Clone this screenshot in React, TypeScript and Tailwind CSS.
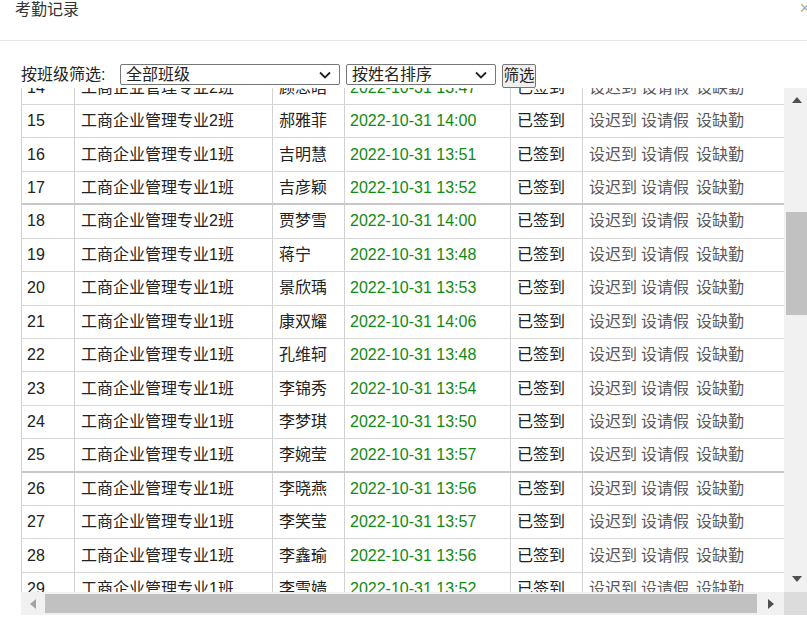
import React from "react";

const rows: [string, string, string, string][] = [
  ["14", "工商企业管理专业2班", "顾思皓", "2022-10-31 13:47"],
  ["15", "工商企业管理专业2班", "郝雅菲", "2022-10-31 14:00"],
  ["16", "工商企业管理专业1班", "吉明慧", "2022-10-31 13:51"],
  ["17", "工商企业管理专业1班", "吉彦颖", "2022-10-31 13:52"],
  ["18", "工商企业管理专业2班", "贾梦雪", "2022-10-31 14:00"],
  ["19", "工商企业管理专业1班", "蒋宁", "2022-10-31 13:48"],
  ["20", "工商企业管理专业1班", "景欣瑀", "2022-10-31 13:53"],
  ["21", "工商企业管理专业1班", "康双耀", "2022-10-31 14:06"],
  ["22", "工商企业管理专业1班", "孔维轲", "2022-10-31 13:48"],
  ["23", "工商企业管理专业1班", "李锦秀", "2022-10-31 13:54"],
  ["24", "工商企业管理专业1班", "李梦琪", "2022-10-31 13:50"],
  ["25", "工商企业管理专业1班", "李婉莹", "2022-10-31 13:57"],
  ["26", "工商企业管理专业1班", "李晓燕", "2022-10-31 13:56"],
  ["27", "工商企业管理专业1班", "李笑莹", "2022-10-31 13:57"],
  ["28", "工商企业管理专业1班", "李鑫瑜", "2022-10-31 13:56"],
  ["29", "工商企业管理专业1班", "李雪嫱", "2022-10-31 13:52"],
];

const Chevron = () => (
  <svg width="14" height="10" viewBox="0 0 14 10" className="shrink-0">
    <polyline points="2,2.5 7,7.5 12,2.5" fill="none" stroke="#222" strokeWidth="1.8" />
  </svg>
);

export default function App() {
  return (
    <div
      className="w-[807px] h-[630px] bg-white overflow-hidden text-[16px] text-[#222]"
      style={{ fontFamily: '"Liberation Sans", "Noto Sans CJK SC", sans-serif' }}
    >
      {/* header */}
      <div className="h-[41px] border-b border-[#e6e6e6] flex items-start justify-between">
        <div className="pl-[15px] leading-[20px] text-[16px] text-[#333]">考勤记录</div>
        <div className="leading-[16px] text-[18px] text-[#aaa] mr-[-3px]">×</div>
      </div>

      {/* filter row */}
      <div className="pl-[21px] pt-[23px] flex items-start h-[47px]">
        <div className="w-[99px] shrink-0 h-[22px] flex items-center leading-[22px] whitespace-nowrap">按班级筛选:</div>
        <div className="w-[220px] shrink-0 h-[21px] border border-[#767676] rounded-[2px] flex items-center justify-between pl-[5px] pr-[7px] leading-[19px]">
          <span>全部班级</span>
          <Chevron />
        </div>
        <div className="ml-[6px] w-[150px] shrink-0 h-[21px] border border-[#767676] rounded-[2px] flex items-center justify-between pl-[5px] pr-[7px] leading-[19px]">
          <span>按姓名排序</span>
          <Chevron />
        </div>
        <div className="ml-[6px] w-[34px] shrink-0 h-[24px] border border-[#767676] rounded-[2px] bg-[#efefef] flex items-center justify-center leading-[20px] whitespace-nowrap text-[15.5px]">
          筛选
        </div>
      </div>

      {/* table area */}
      <div className="ml-[21px] flex flex-col w-[786px]">
        <div className="flex h-[504px]">
          <div className="w-[763px] overflow-hidden">
            <div className="mt-[-16.43px] w-[770px]">
              {rows.map((r) => {
                const thick = r[0] === "17" || r[0] === "25";
                return (
                  <div
                    key={r[0]}
                    className={
                      "flex h-[33.43px] box-border border-l border-[#d2d2d2] " +
                      (thick ? "border-b-2 border-b-[#c8c8c8]" : "border-b border-b-[#d6d6d6]")
                    }
                  >
                    <div className="w-[53px] border-r border-[#d2d2d2] pl-[5px] flex items-center">{r[0]}</div>
                    <div className="w-[198px] border-r border-[#d2d2d2] pl-[6px] flex items-center">{r[1]}</div>
                    <div className="w-[72px] border-r border-[#d2d2d2] pl-[6px] flex items-center">{r[2]}</div>
                    <div className="w-[166px] border-r border-[#d2d2d2] pl-[5px] flex items-center text-[#118a11]">{r[3]}</div>
                    <div className="w-[72px] border-r border-[#d2d2d2] pl-[6px] flex items-center">已签到</div>
                    <div className="w-[208px] pl-[6px] flex items-center text-[#5a5a5a] whitespace-nowrap">
                      <span>设迟到</span>
                      <span className="ml-[4px]">设请假</span>
                      <span className="ml-[7px]">设缺勤</span>
                    </div>
                  </div>
                );
              })}
            </div>
          </div>
          {/* vertical scrollbar */}
          <div className="w-[23px] shrink-0 bg-[#f1f1f1] flex flex-col">
            <div className="h-[24px] flex items-center justify-center pl-[3px]">
              <svg width="10" height="6" viewBox="0 0 10 6">
                <polygon points="0,6 5,0 10,6" fill="#505050" />
              </svg>
            </div>
            <div className="flex-1 pt-[100px]">
              <div className="ml-[2px] h-[103px] bg-[#c1c1c1]" />
            </div>
            <div className="h-[26px] flex items-center justify-center pl-[3px]">
              <svg width="10" height="6" viewBox="0 0 10 6">
                <polygon points="0,0 10,0 5,6" fill="#505050" />
              </svg>
            </div>
          </div>
        </div>
        {/* horizontal scrollbar */}
        <div className="flex h-[23px]">
          <div className="w-[763px] bg-[#f1f1f1] flex items-center">
            <div className="w-[24px] h-full flex items-center justify-center">
              <svg width="6" height="10" viewBox="0 0 6 10">
                <polygon points="6,0 0,5 6,10" fill="#a3a3a3" />
              </svg>
            </div>
            <div className="w-[712px] h-[19px] bg-[#c1c1c1]" />
            <div className="flex-1 h-full flex items-center justify-center">
              <svg width="6" height="10" viewBox="0 0 6 10">
                <polygon points="0,0 6,5 0,10" fill="#505050" />
              </svg>
            </div>
          </div>
          <div className="w-[23px] bg-[#dcdcdc]" />
        </div>
      </div>
    </div>
  );
}
